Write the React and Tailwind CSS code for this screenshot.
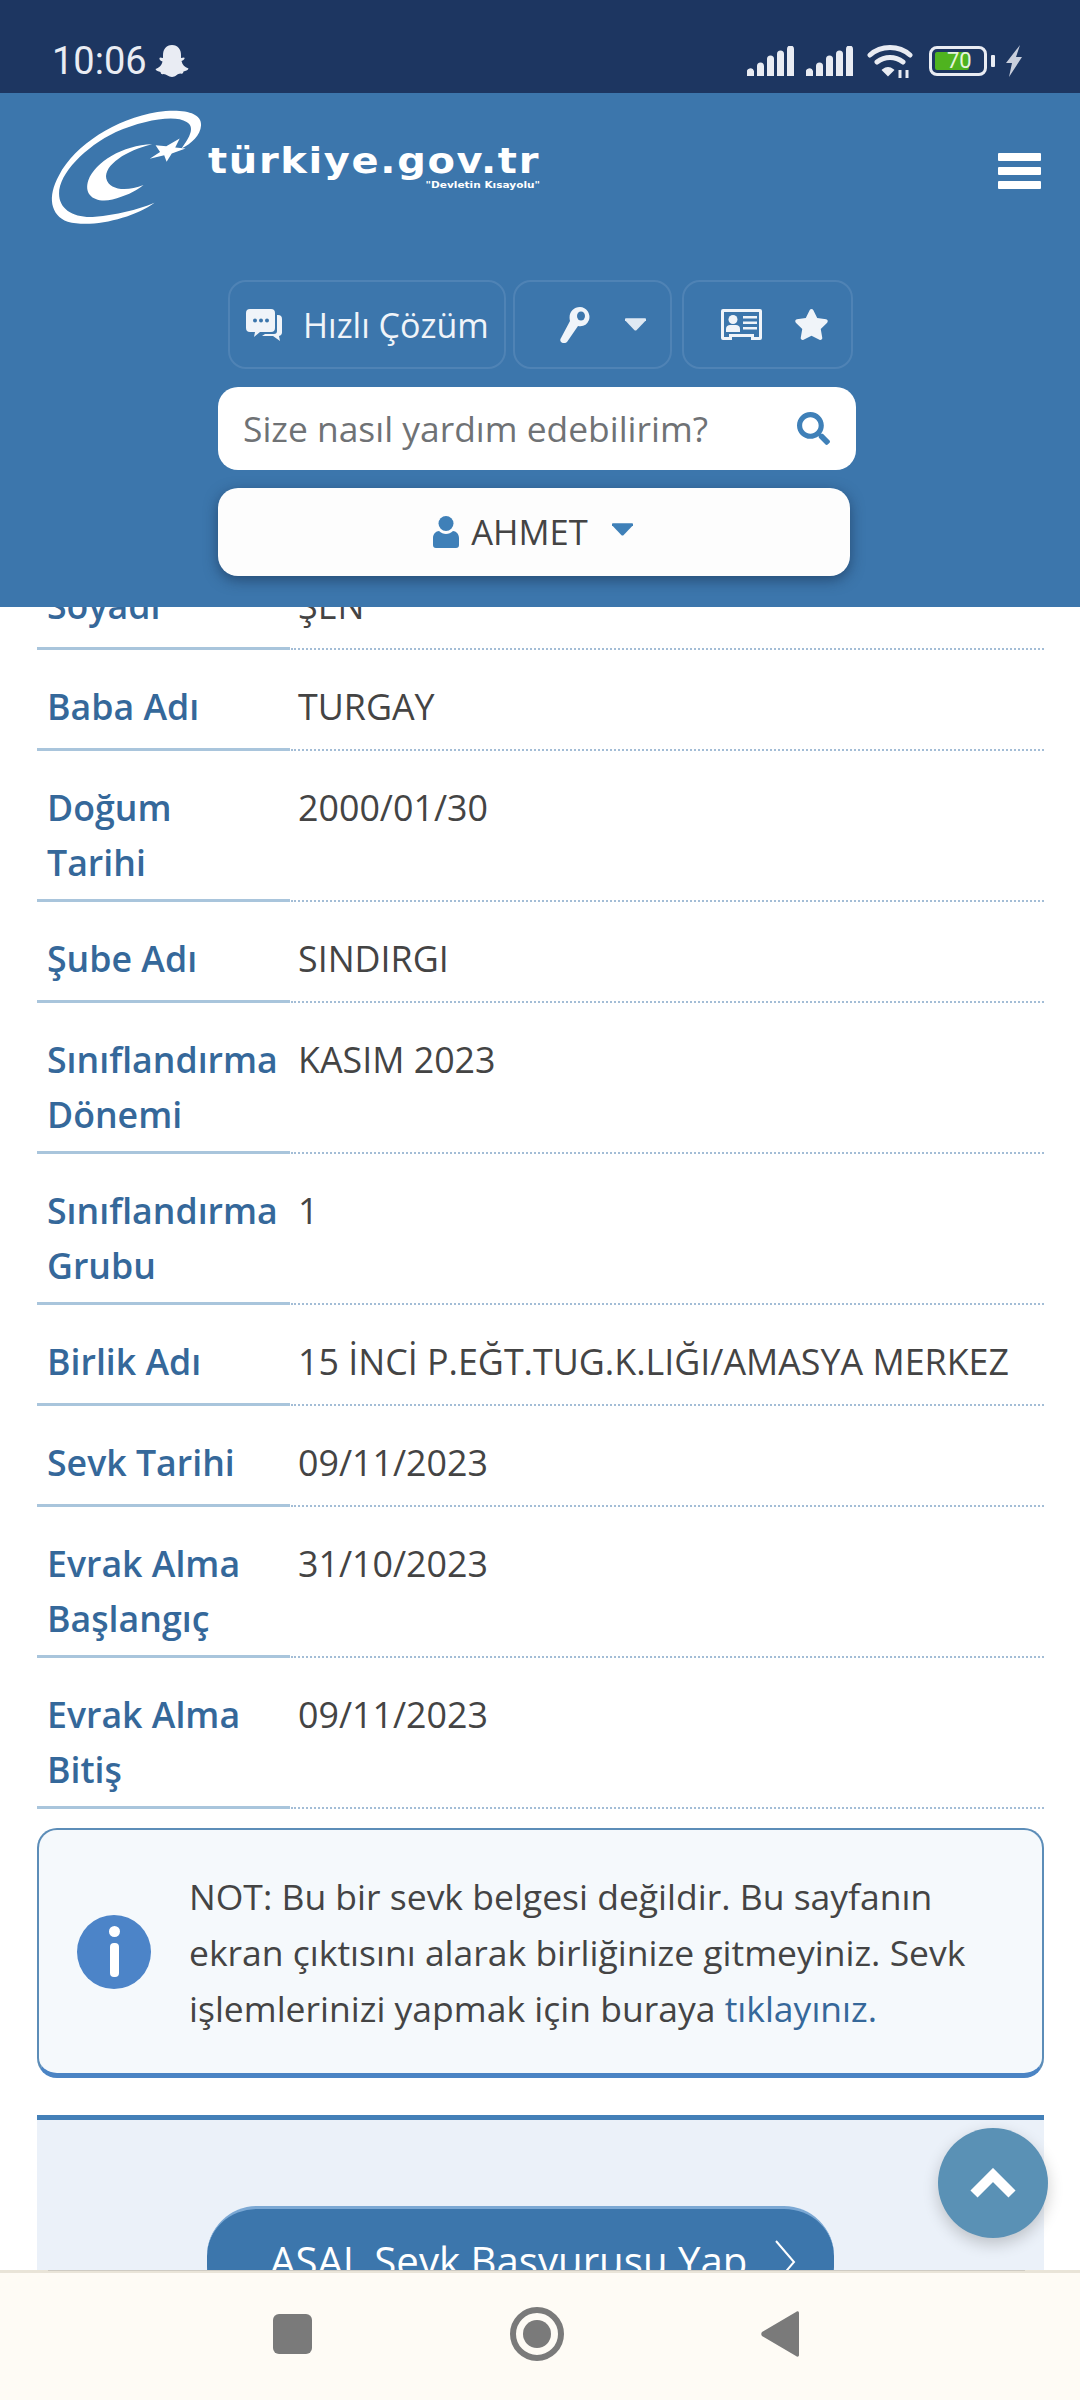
import { FaSearch, FaStar } from 'react-icons/fa'

const rows = [
  { label: 'Soyadı', value: 'ŞEN', tall: false },
  { label: 'Baba Adı', value: 'TURGAY', tall: false },
  { label: 'Doğum\nTarihi', value: '2000/01/30', tall: true },
  { label: 'Şube Adı', value: 'SINDIRGI', tall: false },
  { label: 'Sınıflandırma\nDönemi', value: 'KASIM 2023', tall: true },
  { label: 'Sınıflandırma\nGrubu', value: '1', tall: true },
  { label: 'Birlik Adı', value: '15 İNCİ P.EĞT.TUG.K.LIĞI/AMASYA MERKEZ', tall: false },
  { label: 'Sevk Tarihi', value: '09/11/2023', tall: false },
  { label: 'Evrak Alma\nBaşlangıç', value: '31/10/2023', tall: true },
  { label: 'Evrak Alma\nBitiş', value: '09/11/2023', tall: true }
]

function Signal() {
  return (
    <svg width="48" height="30" viewBox="0 0 48 30" fill="#e9ecf3">
      <path d="M0 30v-3a3 3 0 0 1 7-2v5z" />
      <path d="M10 30V20a3.5 3.5 0 0 1 7 0v10z" />
      <path d="M20 30V13a3.5 3.5 0 0 1 7 0v17z" />
      <path d="M30 30V8a3.5 3.5 0 0 1 7 0v22z" />
      <path d="M40 30V3a3.5 3.5 0 0 1 7 0v27z" />
    </svg>
  )
}

function StatusBar() {
  return (
    <div className="h-[93px] shrink-0 bg-[#1d3661] flex items-center justify-between pl-[52px] pr-[57px] pt-[29px] text-[#e9ecf3] font-['Roboto',sans-serif]">
      <div className="flex items-center gap-[8px]">
        <span className="text-[38px] leading-none">10:06</span>
        <svg width="34" height="32" viewBox="0 0 34 32" fill="#e9ecf3">
          <path d="M17 0c6 0 9 4.500 9 10v3l3-.5c1 .5 1 2-2.500 3.500 1 4 3 6 7 7.500-.5 2-3 2.500-5 3-.5 2-1 2.500-3 2-3 0-5 3.500-8.500 3.500S11.500 29 8.500 29c-2 .5-2.500 0-3-2-2-.5-4.500-1-5-3 4-1.500 6-3.500 7-7.500C4 15 4 13.500 5 12.500l3 .5v-3C8 4.500 11 0 17 0z" />
        </svg>
      </div>
      <div className="flex items-center">
        <Signal />
        <div className="ml-[11px]"><Signal /></div>
        <svg className="ml-[13px]" width="46" height="34" viewBox="0 0 46 34" fill="none" stroke="#e9ecf3" strokeWidth="5" strokeLinecap="round">
          <path d="M3 11C14 1 32 1 43 11" />
          <path d="M10 18c8-6 18-6 26 0" />
          <path d="M21 31l-5-5c3-2.500 7-2.500 10 0z" fill="#e9ecf3" strokeWidth="2" />
          <path d="M33 34v-8M40 34v-8" strokeWidth="3" strokeLinecap="butt" />
        </svg>
        <div className="ml-[16px] relative w-[58px] h-[30px] rounded-[8px] border-[3px] border-[#e9ecf3] p-[3px]">
          <div className="h-full w-[34px] bg-[#4fb31f] rounded-[2px]" />
          <span className="absolute left-[15px] top-0 text-[22px] leading-[24px] text-[#e6f5dc]">70</span>
        </div>
        <div className="ml-[4px] w-[4px] h-[12px] bg-[#e9ecf3] rounded-[1px]" />
        <svg className="ml-[10px]" width="18" height="32" viewBox="0 0 18 32" fill="#c9cfdc">
          <path d="M15 0L1 18h6L4 32 17 12h-6l4-12z" />
        </svg>
      </div>
    </div>
  )
}

function Logo() {
  return (
    <div className="flex">
      <svg width="162" height="123" viewBox="50 50 470 370" preserveAspectRatio="none" fill="#fff">
        <path d="M362 338C300 385 180 415 110 395 60 375 50 320 85 255 130 165 250 85 370 65 440 55 500 65 497 105 495 135 470 160 440 175 465 140 480 110 455 95 420 72 330 90 250 125 160 170 85 250 85 310 85 360 130 385 190 380 250 375 310 360 362 338Z" />
        <path d="M355 162C270 165 190 215 170 270 155 315 190 340 240 328 275 320 305 305 330 285 280 305 230 300 222 265 215 225 280 180 355 162Z" />
        <polygon points="435,145 422,172 452,175 412,190 397,215 390,195 348,206 378,185 365,165 396,168" />
      </svg>
      <div className="ml-[-1px] mt-[33px] flex flex-col items-end text-white font-['DejaVu_Sans',sans-serif] font-bold origin-left scale-x-[1.11]">
        <span className="text-[36px] leading-[42px] tracking-[1.5px]">türkiye.gov.tr</span>
        <span className="text-[9.500px] leading-[11px] mt-[-3px]">"Devletin Kısayolu"</span>
      </div>
    </div>
  )
}

function Caret({ color }) {
  return (
    <svg width="21" height="13" viewBox="0 0 22 13" fill={color}>
      <path d="M1 0h20c1 0 1.500 1 1 2L12 12.500c-.5.5-1.500.5-2 0L0 2C-.5 1 0 0 1 0z" />
    </svg>
  )
}

function Header() {
  return (
    <div className="h-[514px] shrink-0 bg-[#3c76ac] relative z-10 font-['Open_Sans',sans-serif]">
      <div className="flex justify-between pl-[47px] pr-[39px] pt-[14px]">
        <Logo />
        <div className="mt-[46px] flex flex-col gap-[6px]">
          {[0, 1, 2].map(i => (
            <div key={i} className="w-[43px] h-[8px] bg-white rounded-[1px]" />
          ))}
        </div>
      </div>

      <div className="mt-[50px] ml-[228px] flex text-[#f0f4f9]">
        <div className="w-[278px] h-[89px] rounded-[18px] border-2 border-[#4f83b5] flex items-center pl-[16px]">
          <svg width="36" height="32" viewBox="0 0 36 32" fill="#f0f4f9">
            <path d="M4 0h21a4 4 0 0 1 4 4v15a4 4 0 0 1-4 4H14l-6 5 1-5H4a4 4 0 0 1-4-4V4a4 4 0 0 1 4-4z" />
            <path d="M31 6h1a4 4 0 0 1 4 4v13a4 4 0 0 1-3 4l1 5-7-5H16l3-2h9a3 3 0 0 0 3-3z" />
            <circle cx="9" cy="11.500" r="2" fill="#3c76ac" />
            <circle cx="15" cy="11.500" r="2" fill="#3c76ac" />
            <circle cx="21" cy="11.500" r="2" fill="#3c76ac" />
          </svg>
          <span className="ml-[21px] text-[34px] leading-none whitespace-nowrap">Hızlı Çözüm</span>
        </div>
        <div className="ml-[7px] w-[159px] h-[89px] rounded-[18px] border-2 border-[#4f83b5] flex items-center pl-[45px]">
          <svg width="30" height="36" viewBox="0 0 30 36" fill="#f0f4f9">
            <path d="M20 0a10 10 0 0 1 9 13c-2 5-6 7-11 6L7 35c-1 1.500-5 1.500-6 0-1-1-1-3 0-4L10 14C8 6 13 0 20 0z" />
            <ellipse cx="21" cy="9" rx="4" ry="4.500" fill="#3c76ac" />
          </svg>
          <div className="ml-[35px]"><Caret color="#dfe9f3" /></div>
        </div>
        <div className="ml-[10px] w-[171px] h-[89px] rounded-[18px] border-2 border-[#4f83b5] flex items-center pl-[37px]">
          <svg width="41" height="31" viewBox="0 0 41 31" fill="#f0f4f9">
            <path fillRule="evenodd" d="M2 0h37a2 2 0 0 1 2 2v27a2 2 0 0 1-2 2h-9v-3H11v3H2a2 2 0 0 1-2-2V2a2 2 0 0 1 2-2zm1 3v25h5v-3h25v3h5V3z" />
            <circle cx="12" cy="10.500" r="4.500" />
            <path d="M5 23v-3c0-3 2-4 4-4h6c2 0 4 1 4 4v3z" />
            <rect x="22" y="7" width="14" height="2.500" />
            <rect x="22" y="12.500" width="14" height="2.500" />
            <rect x="22" y="18" width="14" height="2.500" />
          </svg>
          <FaStar className="ml-[32px] text-[35px] text-[#f0f4f9]" />
        </div>
      </div>

      <div className="mt-[18px] ml-[218px] w-[638px] h-[83px] bg-white rounded-[20px] flex items-center justify-between pl-[25px] pr-[26px]">
        <span className="text-[35.400px] leading-none text-[#6f7275] whitespace-nowrap">Size nasıl yardım edebilirim?</span>
        <FaSearch className="text-[33px] text-[#3f80b8]" />
      </div>

      <div className="mt-[18px] ml-[218px] w-[632px] h-[88px] bg-[#fdfdfd] rounded-[20px] shadow-[0_4px_14px_rgba(20,40,70,0.55)] flex items-center justify-center pr-[2px]">
        <svg width="26" height="32" viewBox="0 0 26 32" fill="#3f80b8">
          <circle cx="13" cy="7.500" r="7.500" />
          <path d="M0 29V22c0-4 3-7 6-7 2 2 4.500 3 7 3s5-1 7-3c3 0 6 3 6 7v7c0 2-1 3-3 3H3c-2 0-3-1-3-3z" />
        </svg>
        <span className="ml-[12px] text-[34.500px] leading-none text-[#444]">AHMET</span>
        <div className="ml-[24px] mb-[6px]"><Caret color="#3f80b8" /></div>
      </div>
    </div>
  )
}

function InfoRow({ row }) {
  return (
    <div className={row.tall ? 'flex h-[151px]' : 'flex h-[101px]'}>
      <div className="w-[253px] shrink-0 border-b-[3px] border-[#a9c5dc] pl-[10px] pt-[29px] font-semibold text-[#35689a] text-[35.700px] leading-[55px] whitespace-pre-line">
        {row.label}
      </div>
      <div className="flex-1 ml-[1px] border-b-2 border-dotted border-[#a3bdd6] pl-[7px] pt-[29px] text-[#444] text-[35.800px] leading-[55px] whitespace-nowrap">
        {row.value}
      </div>
    </div>
  )
}

function Content() {
  return (
    <div className="flex-1 min-h-0 overflow-hidden pr-[36px] pl-[37px] font-['Open_Sans',sans-serif]">
      <div className="mt-[-58px]">
        {rows.map(row => <InfoRow key={row.label} row={row} />)}
      </div>

      <div className="mt-[19px] h-[250px] rounded-[20px] border-2 border-b-[5px] border-[#5c8db8] border-b-[#4b84c4] bg-[#f5f9fc] flex items-center pl-[38px] pr-[20px]">
        <div className="w-[74px] h-[74px] shrink-0 rounded-full bg-[#4c84c8] flex flex-col items-center justify-center">
          <div className="w-[11px] h-[11px] rounded-full bg-white" />
          <div className="mt-[6px] w-[9px] h-[34px] rounded-[4px] bg-white" />
        </div>
        <p className="ml-[38px] text-[35.500px] leading-[56px] text-[#444]">
          NOT: Bu bir sevk belgesi değildir. Bu sayfanın ekran çıktısını alarak birliğinize gitmeyiniz. Sevk işlemlerinizi yapmak için buraya <span className="text-[#35689a]">tıklayınız.</span>
        </p>
      </div>

      <div className="mt-[37px] h-[300px] border-t-[5px] border-[#4480b8] bg-[#ebf1f9] pt-[86px]">
        <div className="ml-[170px] w-[627px] h-[110px] rounded-[50px] bg-[#3c76ac] border-t-[3px] border-[#7ba8d4] flex items-center pl-[63px] pb-[2px] text-white">
          <span className="text-[40.200px] leading-none whitespace-nowrap">ASAL Sevk Başvurusu Yap</span>
          <svg className="ml-[26px]" width="24" height="44" viewBox="0 0 24 44" fill="none" stroke="#fff" strokeWidth="2">
            <path d="M3 1l18 21L3 43" />
          </svg>
        </div>
      </div>
    </div>
  )
}

function NavBar() {
  return (
    <div className="h-[130px] shrink-0 bg-[#fefbf5] border-t-[3px] border-[#e9e4d8] relative z-10 flex items-center pl-[273px] pb-[6px]">
      <div className="absolute left-[48px] right-[55px] top-[-3px] h-[1px] bg-[#cfcbc2]" />
      <div className="w-[39px] h-[40px] rounded-[6px] bg-[#7a7a7a]" />
      <div className="ml-[198px] w-[54px] h-[54px] rounded-full border-[6px] border-[#7a7a7a] flex items-center justify-center">
        <div className="w-[28px] h-[28px] rounded-full bg-[#7a7a7a]" />
      </div>
      <svg className="ml-[197px]" width="38" height="46" viewBox="0 0 38 46" fill="#7a7a7a">
        <path d="M38 2v42c0 2-2 2-3 1L1 25c-1-1-1-3 0-4L35 1c1-1 3-1 3 1z" />
      </svg>
    </div>
  )
}

export default function App() {
  return (
    <div className="relative h-[2400px] w-[1080px] overflow-hidden flex flex-col bg-white">
      <StatusBar />
      <Header />
      <Content />
      <NavBar />
      <button className="absolute left-[938px] top-[2128px] w-[110px] h-[110px] rounded-full bg-[#5a91b5] shadow-[0_6px_16px_rgba(0,0,0,0.2)] flex items-center justify-center z-20">
        <svg width="46" height="30" viewBox="0 0 46 30" fill="none" stroke="#fff" strokeWidth="10">
          <path d="M4 26L23 7l19 19" />
        </svg>
      </button>
    </div>
  )
}
